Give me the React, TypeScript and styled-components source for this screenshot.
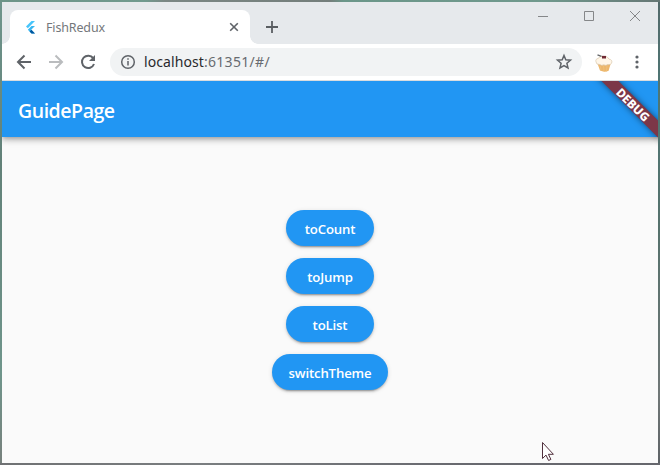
import React from "react";
import styled, { createGlobalStyle } from "styled-components";

const GlobalStyle = createGlobalStyle`
  * { box-sizing: border-box; }
  body { margin: 0; overflow: hidden; font-family: "Noto Sans", "Open Sans", sans-serif; }
`;

const Desktop = styled.div`
  width: 660px;
  height: 465px;
  padding: 2px;
  background:
    linear-gradient(90deg, #6d9488, #719a8e 22%, #7b8784 25%, #747e7b 50%, #6b9689 52%, #70998d 82%, #667775) top / 100% 2px no-repeat,
    linear-gradient(90deg, #6f7173, #7a7e80 30%, #68696f 70%, #66676d) bottom / 100% 2px no-repeat,
    linear-gradient(#6f958c, #628178 35%, #6f958b 80%, #77807c) left / 2px 100% no-repeat,
    linear-gradient(#53696a, #4e7775 20%, #56716c 50%, #707777 85%, #5d6266) right / 2px 100% no-repeat;
`;

const BrowserWindow = styled.div`
  height: 461px;
  display: flex;
  flex-direction: column;
  overflow: hidden;
  background: #fafafa;
`;

const TabStrip = styled.header`
  height: 42px;
  flex: none;
  display: flex;
  align-items: flex-end;
  padding-left: 8px;
  background: #e6e9ec;
`;

const Tab = styled.div`
  position: relative;
  width: 240px;
  height: 34px;
  display: flex;
  align-items: center;
  padding: 0 9px 0 12px;
  border-radius: 8px 8px 0 0;
  background: #fff;
  &::before, &::after {
    content: "";
    position: absolute;
    bottom: 0;
    width: 8px;
    height: 8px;
  }
  &::before { left: -8px; background: radial-gradient(circle at 0 0, transparent 7.5px, #fff 8px); }
  &::after { right: -8px; background: radial-gradient(circle at 100% 0, transparent 7.5px, #fff 8px); }
`;

const TabTitle = styled.span`
  flex: 1;
  margin-left: 8px;
  padding-top: 2px;
  font-size: 12.5px;
  line-height: 18px;
  color: #74777b;
  letter-spacing: -0.15px;
`;

const NewTab = styled.div`
  display: flex;
  margin: 0 auto 9px 14px;
`;

const WindowControls = styled.div`
  display: flex;
  align-self: flex-start;
  gap: 34px;
  margin: 8px 17px 0 0;
`;

const Toolbar = styled.nav`
  height: 37px;
  flex: none;
  display: flex;
  align-items: center;
  padding: 0 13px 1px 12px;
  background: #fff;
  border-bottom: 1px solid #d9dcdf;
`;

const NavIcons = styled.div`
  display: flex;
  gap: 12px;
`;

const AddressBar = styled.div`
  width: 472px;
  height: 28px;
  display: flex;
  align-items: center;
  margin-left: 12px;
  padding: 0 9px 0 10px;
  border-radius: 14px;
  background: #f1f3f4;
`;

const Url = styled.span`
  flex: 1;
  margin-left: 8px;
  font-size: 14px;
  line-height: 20px;
  letter-spacing: 0.32px;
  color: #686b70;
`;

const Host = styled.span`
  letter-spacing: 0.08px;
  color: #292a2d;
`;

const ToolbarActions = styled.div`
  display: flex;
  align-items: center;
  gap: 15px;
  margin-left: auto;
`;

const AppBar = styled.div`
  position: relative;
  height: 56px;
  flex: none;
  display: flex;
  align-items: center;
  padding-left: 16px;
  background: #2196f3;
  box-shadow: 0 2px 4px -1px rgba(0,0,0,.2), 0 4px 5px rgba(0,0,0,.14), 0 1px 10px rgba(0,0,0,.12);
  clip-path: inset(0 0 -16px 0);
`;

const PageTitle = styled.h1`
  margin: 0;
  padding-top: 3px;
  color: #fff;
  font-family: "Open Sans", sans-serif;
  font-size: 19.5px;
  font-weight: 650;
  letter-spacing: -0.45px;
  line-height: 28px;
`;

const DebugRibbon = styled.div`
  position: absolute;
  right: -39px;
  top: 18px;
  width: 126px;
  height: 12px;
  transform: rotate(45deg);
  background: #7c3748;
  box-shadow: 0 0 6px rgba(0,0,0,.5);
  color: #fff;
  font: 800 12px/13px "Noto Sans", sans-serif;
  text-align: center;
  padding-right: 2px;
`;

const Content = styled.main`
  flex: 1;
  display: flex;
  flex-direction: column;
  align-items: center;
  padding-top: 73px;
  gap: 12px;
`;

const PillButton = styled.button<{ $wide?: boolean }>`
  width: ${({ $wide }) => ($wide ? 116 : 88)}px;
  height: 36px;
  padding: 1px 0 0;
  border: 0;
  border-radius: 18px;
  color: #fff;
  background: #2196f3;
  box-shadow: 0 3px 1px -2px rgba(0,0,0,.2), 0 2px 2px rgba(0,0,0,.14), 0 1px 5px rgba(0,0,0,.12);
  font: 650 13.2px/20px "Open Sans", sans-serif;
  letter-spacing: -0.15px;
`;

const Cursor = styled.svg`
  position: absolute;
  left: 541px;
  top: 441px;
`;

const routes = ["toCount", "toJump", "toList", "switchTheme"];

function FlutterLogo() {
  return (
    <svg width="16" height="16" viewBox="0 0 16 16">
      <path d="M9.5 2H13L5.8 9.2 4 7.5Z" fill="#47c5fb" />
      <path d="M9.5 7H13L9.2 10.7 13 14.5H9.5L5.8 10.7Z" fill="#38b7f1" />
      <path d="M7.6 12.5 9.4 10.8 13 14.5H9.5Z" fill="#00569e" />
    </svg>
  );
}

function Cupcake() {
  return (
    <svg width="20" height="20" viewBox="0 0 20 20" overflow="visible">
      <g transform="translate(0 1.3)">
        <path d="M3.2 9.5 16.8 10l-2.2 7.4Q10.5 19.5 6 17.3Z" fill="#ecb66b" />
        <path d="m6 12 1 5m2.5-5 .5 6m3-6-.5 6" stroke="#f0bf78" />
        <path d="M2 8.5Q1 5.7 4.5 5 5 2.5 9 3q5-.5 6 2.8 3.8.8 2.6 4-1 2.2-3.8 1.5-2 1.4-4 .2-2.4 1.2-4-.3Q2 11.5 2 8.5Z" fill="#fff6e8" stroke="#d9c7ac" strokeWidth=".7" />
        <path d="m3.5 1.6 4 1.5" stroke="#65666a" strokeWidth="1.3" />
        <path d="M8 2.6h4v2.6H8Z" fill="#702934" />
      </g>
    </svg>
  );
}

export default function App() {
  return (
    <>
      <GlobalStyle />
      <Desktop>
        <BrowserWindow>
          <TabStrip>
            <Tab>
              <FlutterLogo />
              <TabTitle>FishRedux</TabTitle>
              <svg width="14" height="14" viewBox="0 0 14 14" stroke="#5f6368" strokeWidth="1.6"><path d="m3.2 3.2 7.6 7.6M10.8 3.2l-7.6 7.6" /></svg>
            </Tab>
            <NewTab>
              <svg width="16" height="16" viewBox="0 0 16 16" stroke="#5a5e62" strokeWidth="1.8"><path d="M2 8h12M8 2v12" /></svg>
            </NewTab>
            <WindowControls>
              {["M1 6.5h10", "M1.5 1.5h9v9h-9Z", "m1 1 10 10M11 1 1 11"].map((d) => (
                <svg key={d} width="12" height="12" viewBox="0 0 12 12" fill="none" stroke="#858789"><path d={d} /></svg>
              ))}
            </WindowControls>
          </TabStrip>
          <Toolbar>
            <NavIcons>
              {["#5f6368", "#babcbe"].map((color, index) => (
                <svg key={color} width="20" height="20" viewBox="0 0 20 20" fill="none" stroke={color} strokeWidth="2">
                  <path d={index === 0 ? "M17 10H4m6.5-6.5L4 10l6.5 6.5" : "M3 10h13M9.5 3.5 16 10l-6.5 6.5"} />
                </svg>
              ))}
              <svg width="20" height="20" viewBox="0 0 20 20" fill="none" stroke="#5f6368" strokeWidth="2">
                <path d="M15.2 6.2A6.2 6.2 0 1 0 16 12" /><path d="M17 3v6h-6Z" fill="#5f6368" stroke="none" />
              </svg>
            </NavIcons>
            <AddressBar>
              <svg width="16" height="16" viewBox="0 0 16 16" fill="none" stroke="#5f6368" strokeWidth="1.5"><circle cx="8" cy="8" r="6.3" /><path d="M8 7v4.5M8 4.2v1.6" /></svg>
              <Url><Host>localhost</Host>:61351/#/</Url>
              <svg width="18" height="18" viewBox="0 0 18 18" fill="none" stroke="#5f6368" strokeWidth="1.5"><path d="m9 2.5 1.8 4.3 4.7.4-3.6 3.1 1.1 4.6L9 12.5 5 14.9l1.1-4.6-3.6-3.1 4.7-.4Z" /></svg>
            </AddressBar>
            <ToolbarActions>
              <Cupcake />
              <svg width="16" height="16" viewBox="0 0 16 16" fill="#5f6368"><circle cx="8" cy="3" r="1.6" /><circle cx="8" cy="8" r="1.6" /><circle cx="8" cy="13" r="1.6" /></svg>
            </ToolbarActions>
          </Toolbar>
          <AppBar>
            <PageTitle>GuidePage</PageTitle>
            <DebugRibbon>DEBUG</DebugRibbon>
          </AppBar>
          <Content>
            {routes.map((route) => <PillButton key={route} $wide={route === "switchTheme"}>{route}</PillButton>)}
          </Content>
        </BrowserWindow>
      </Desktop>
      <Cursor width="14" height="21" viewBox="0 0 14 21">
        <path d="M1.5 1.5v16l3.5-3.4 2.6 5.4 2.3-1.1-2.5-5.1h5Z" fill="#fff" stroke="#51303d" />
      </Cursor>
    </>
  );
}
